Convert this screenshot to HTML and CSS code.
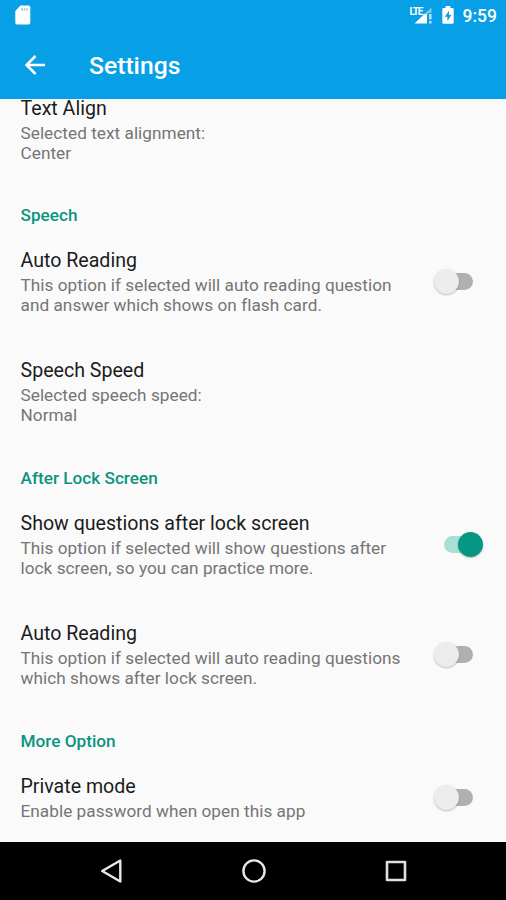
FILE: index.html
```html
<!DOCTYPE html>
<html lang="en">
<head>
  <meta charset="UTF-8">
  <meta name="viewport" content="width=device-width, initial-scale=1.0">
  <title>Settings</title>
  <link rel="stylesheet" href="styles.css">
</head>

<body>
  <!-- Status bar -->
  <div class="statusbar">
    <svg class="sd-icon" width="16" height="20" viewBox="0 0 16 20">
      <path d="M5.5 0.5H13.5Q15.3 0.5 15.3 2.3V17.7Q15.3 19.5 13.5 19.5H2Q0.3 19.5 0.3 17.7V6Z" fill="#fff"/>
      <path d="M6.2 3.2h1.6v2.4h-1.6zM8.8 3.2h1.4v2.4h-1.4zM11.2 3.2h1.4v2.4h-1.4z" fill="#7cc8f0"/>
    </svg>
    <div class="status-right">
      <div class="signal">
        <span class="lte">LTE</span>
        <svg width="24" height="20" viewBox="0 0 24 20">
          <path d="M5.5 18.5L16.5 8H18V18.5Z" fill="#fff"/>
          <path d="M16.5 8L22.5 2.5V8H19V9.5H16.5Z" fill="#7cc8f0"/>
          <path d="M20 9h2.6v5.5h-2.6zM20 16h2.6v2.6h-2.6z" fill="#b5e0f7"/>
        </svg>
      </div>
      <svg class="battery" width="12" height="18" viewBox="0 0 12 18">
        <path d="M3.6 0H8.4V2H10.5Q11.7 2 11.7 3.2V16.6Q11.7 17.8 10.5 17.8H1.5Q0.3 17.8 0.3 16.6V3.2Q0.3 2 1.5 2H3.6Z" fill="#fff"/>
        <path d="M7 4.8L2.8 10.8H5.4V15L9.4 9H7Z" fill="#079fe6"/>
      </svg>
      <span class="clock">9:59</span>
    </div>
  </div>

  <!-- App bar -->
  <header class="appbar">
    <svg class="back" width="20" height="20" viewBox="0 0 20 20">
      <path d="M20 10H2M10.5 1L1.5 10L10.5 19" fill="none" stroke="#fff" stroke-width="2.6"/>
    </svg>
    <h1>Settings</h1>
  </header>

  <!-- Preference list -->
  <main class="list">
    <div class="item first">
      <div class="text">
        <h3>Text Align</h3>
        <p>Selected text alignment:<br>Center</p>
      </div>
    </div>

    <h2>Speech</h2>
    <div class="item">
      <div class="text">
        <h3>Auto Reading</h3>
        <p>This option if selected will auto reading question<br>and answer which shows on flash card.</p>
      </div>
      <div class="switch"><span class="thumb"></span></div>
    </div>
    <div class="item">
      <div class="text">
        <h3>Speech Speed</h3>
        <p>Selected speech speed:<br>Normal</p>
      </div>
    </div>

    <h2>After Lock Screen</h2>
    <div class="item">
      <div class="text">
        <h3>Show questions after lock screen</h3>
        <p>This option if selected will show questions after<br>lock screen, so you can practice more.</p>
      </div>
      <div class="switch on"><span class="thumb"></span></div>
    </div>
    <div class="item">
      <div class="text">
        <h3>Auto Reading</h3>
        <p>This option if selected will auto reading questions<br>which shows after lock screen.</p>
      </div>
      <div class="switch"><span class="thumb"></span></div>
    </div>

    <h2>More Option</h2>
    <div class="item single">
      <div class="text">
        <h3>Private mode</h3>
        <p>Enable password when open this app</p>
      </div>
      <div class="switch"><span class="thumb"></span></div>
    </div>
  </main>

  <!-- Navigation bar -->
  <nav class="navbar">
    <svg width="24" height="26" viewBox="0 0 24 26">
      <path d="M20.3 2.5V23.5L2.2 13Z" fill="none" stroke="#e8e8e8" stroke-width="2.4" stroke-linejoin="round"/>
    </svg>
    <svg width="24" height="26" viewBox="0 0 24 26">
      <circle cx="12" cy="13" r="10.6" fill="none" stroke="#e8e8e8" stroke-width="2.4"/>
    </svg>
    <svg width="24" height="26" viewBox="0 0 24 26">
      <rect x="3" y="4" width="18" height="18" fill="none" stroke="#e0e0e0" stroke-width="2.6" stroke-linejoin="round"/>
    </svg>
  </nav>
</body>

</html>
```

FILE: styles.css
```css
* {
    box-sizing: border-box;
    margin: 0;
    padding: 0;
}
body {
    display: flex;
    flex-direction: column;
    height: 900px;
    overflow: hidden;
    background-color: #fafafa;
    font-family: Roboto, sans-serif;
}
.statusbar {
    display: flex;
    flex: none;
    justify-content: space-between;
    height: 30px;
    padding: 5px 9px 0 15px;
    background-color: #079fe6;
    color: white;
}
.status-right {
    display: flex;
}
.signal {
    position: relative;
    height: 20px;
    margin-right: 9px;
}
/* network label sits over the signal triangle */
.lte {
    position: absolute;
    left: 1px;
    top: 2px;
    font-size: 10px;
    line-height: 10px;
    font-weight: bold;
    letter-spacing: -1.2px;
}
.battery {
    margin: 1px 9px 0 0;
}
.clock {
    font-size: 17.5px;
    line-height: 22px;
    font-weight: 500;
}
.appbar {
    display: flex;
    flex: none;
    align-items: center;
    height: 69px;
    padding-left: 25px;
    background-color: #079fe6;
}
h1 {
    margin-left: 44px;
    padding-top: 3px;
    color: white;
    font-size: 24.7px;
    line-height: 30px;
    font-weight: 500;
}
/* Scrolled list, first row is partly under the app bar */
.list {
    display: flex;
    flex: 1;
    flex-direction: column;
    justify-content: flex-end;
    min-height: 0;
    overflow: hidden;
}
.item {
    display: flex;
    flex: none;
    justify-content: space-between;
    align-items: center;
    height: 110px;
    padding: 0 22px 0 20.5px;
}
.item.first {
    height: 108px;
}
.item.single {
    height: 89px;
}
.text {
    height: 70px;
    white-space: nowrap;
}
.single .text {
    height: 49px;
}
h2 {
    flex: none;
    height: 43px;
    padding: 21px 0 0 20.5px;
    color: #0b9480;
    font-size: 17.2px;
    line-height: 20px;
    font-weight: 500;
}
h3 {
    padding-top: 1px;
    color: #1c1c1c;
    font-size: 19.6px;
    line-height: 26px;
    font-weight: 400;
}
p {
    margin-top: 1px;
    color: #757575;
    font-size: 17.2px;
    line-height: 20.2px;
    letter-spacing: 0.04px;
}
.switch {
    display: flex;
    align-items: center;
    width: 29px;
    height: 17px;
    margin: 0 11px 2px 0;
    border-radius: 9px;
    background-color: #b0b0b0;
}
.single .switch {
    margin-bottom: 0;
}
.thumb {
    flex: none;
    width: 25px;
    height: 25px;
    margin-left: -10px;
    border-radius: 50%;
    background-color: #ececec;
    box-shadow: 0 1px 2px rgba(0,0,0,0.25);
}
.switch.on {
    background-color: #a9dfd4;
}
.on .thumb {
    margin-left: 14px;
    background-color: #059684;
}
.navbar {
    display: flex;
    flex: none;
    justify-content: space-between;
    align-items: center;
    height: 58px;
    padding: 0 98px 0 100px;
    background-color: black;
}
```
